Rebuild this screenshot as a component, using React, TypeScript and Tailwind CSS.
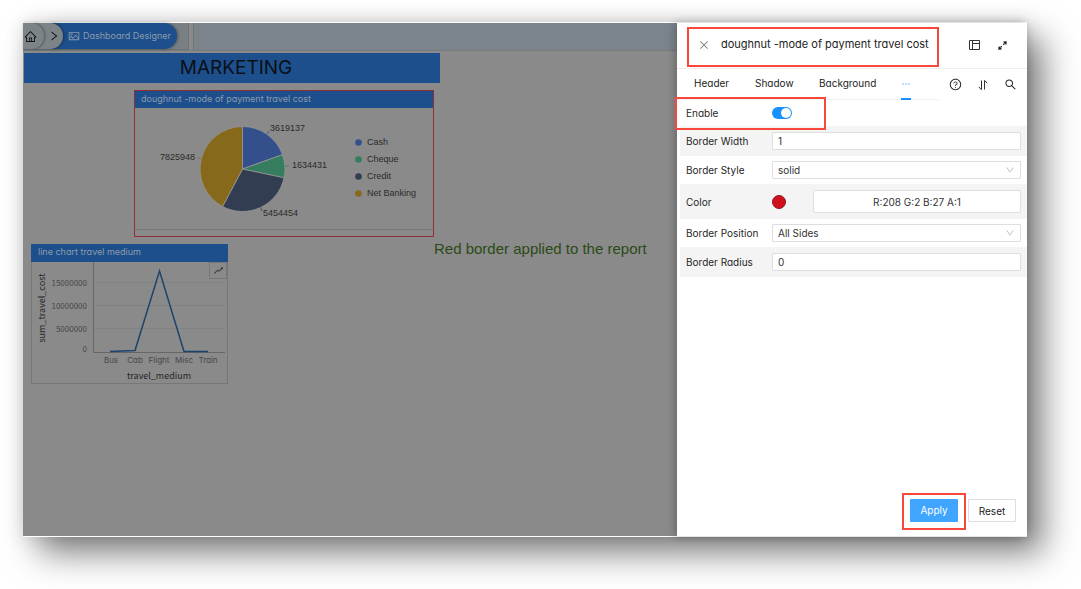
import React from "react";
import {
  AiOutlineHome,
  AiOutlineRight,
  AiOutlinePicture,
  AiOutlineClose,
  AiOutlineQuestionCircle,
  AiOutlineSearch,
  AiOutlineDown,
  AiOutlineRise,
} from "react-icons/ai";

const slices = [
  { name: "Cash", value: 3619137, color: "#34508c" },
  { name: "Cheque", value: 1634431, color: "#367c5f" },
  { name: "Credit", value: 5454454, color: "#333d51" },
  { name: "Net Banking", value: 7825948, color: "#87691c" },
];

const CX = 107.5;
const CY = 61;
const R = 42.5;

function point(angle: number, radius: number): [number, number] {
  return [CX + radius * Math.sin(angle), CY - radius * Math.cos(angle)];
}

function PieChart() {
  const total = slices.reduce((sum, s) => sum + s.value, 0);
  let angle = 0;
  const labels: { x: number; y: number; anchor: "start" | "end" }[] = [
    { x: 135, y: 23, anchor: "start" },
    { x: 157, y: 60, anchor: "start" },
    { x: 128, y: 108, anchor: "start" },
    { x: 60, y: 52, anchor: "end" },
  ];
  return (
    <svg
      width="196"
      height="121"
      viewBox="0 0 196 121"
      className="shrink-0 font-['Liberation_Sans',sans-serif] text-[9px]"
      role="img"
      aria-label="Travel cost by mode of payment"
    >
      {slices.map((s, i) => {
        const start = angle;
        const end = angle + (s.value / total) * Math.PI * 2;
        angle = end;
        const mid = (start + end) / 2;
        const [x1, y1] = point(start, R);
        const [x2, y2] = point(end, R);
        const [lx1, ly1] = point(mid, R);
        const [lx2, ly2] = point(mid, R + 4);
        return (
          <g key={s.name}>
            <path
              d={`M${CX} ${CY}L${x1} ${y1}A${R} ${R} 0 ${end - start > Math.PI ? 1 : 0} 1 ${x2} ${y2}Z`}
              fill={s.color}
              stroke="#969696"
              strokeWidth="0.8"
            />
            <path d={`M${lx1} ${ly1}L${lx2} ${ly2}`} stroke={s.color} strokeWidth="0.8" />
            <text x={labels[i].x} y={labels[i].y} textAnchor={labels[i].anchor} fill="#2a2a2a">
              {s.value}
            </text>
          </g>
        );
      })}
    </svg>
  );
}

function LineChart() {
  const ticks = [
    { label: "15000000", y: 21 },
    { label: "10000000", y: 44 },
    { label: "5000000", y: 67 },
    { label: "0", y: 87 },
  ];
  const media = [
    { label: "Bus", x: 79 },
    { label: "Cab", x: 103 },
    { label: "Flight", x: 127 },
    { label: "Misc", x: 152 },
    { label: "Train", x: 176 },
  ];
  return (
    <svg
      width="195"
      height="121"
      viewBox="0 0 195 121"
      className="block font-['Noto_Sans_CJK_SC',sans-serif]"
      role="img"
      aria-label="Travel cost by travel medium"
    >
      <path d="M62 20.500H193M62 43.500H193M62 66.500H193" stroke="#818181" strokeWidth="1" fill="none" />
      <path d="M61.500 0V90.500H193" stroke="#666" strokeWidth="1" fill="none" />
      {ticks.map((t) => (
        <text key={t.label} x="55" y={t.y + 3} textAnchor="end" fontSize="8" fill="#474747">
          {t.label}
        </text>
      ))}
      {media.map((m) => (
        <text
          key={m.label}
          x={m.x}
          y="101"
          textAnchor="middle"
          fontSize="8"
          fill="#474747"
          className="font-[Inter,sans-serif]"
        >
          {m.label}
        </text>
      ))}
      <path d="M78 89.500L103 88.500L127.500 9L152 89.500H176" stroke="#1d436b" strokeWidth="1.500" fill="none" />
      <text x="127" y="117" textAnchor="middle" fontSize="9" fill="#262626">
        travel_medium
      </text>
      <text transform="translate(13 46) rotate(-90)" textAnchor="middle" fontSize="9" fill="#262626">
        sum_travel_cost
      </text>
    </svg>
  );
}

function LayoutIcon() {
  return (
    <svg width="12" height="12" viewBox="0 0 12 12" fill="none" stroke="#333" strokeWidth="1">
      <path d="M1.500 1.500H11.500V10.500H1.500Z" />
      <path d="M4.500 1.500V10.500M4.500 4.500H11.500" />
    </svg>
  );
}

function SortIcon() {
  return (
    <svg width="12" height="12" viewBox="0 0 12 12" fill="none" stroke="#333" strokeWidth="1">
      <path d="M4.500 1.500V10.500H4.200L1.800 7.800" />
      <path d="M7.500 10.500V1.500H7.800L10.200 4.200" />
    </svg>
  );
}

function ExpandIcon() {
  return (
    <svg width="11" height="11" viewBox="0 0 11 11" fill="#222">
      <path d="M3.500 7.500L4.800 6.200M6.200 4.800L7.500 3.500" stroke="#222" strokeWidth="1.200" fill="none" />
      <path d="M6.300 1.600L9.800 1.200L9.400 4.700L8.300 4.200L6.800 2.700Z" />
      <path d="M1.600 6.300L1.200 9.800L4.700 9.400L4.200 8.300L2.700 6.800Z" />
    </svg>
  );
}

function Row({
  label,
  htmlFor,
  shaded,
  children,
}: {
  label: string;
  htmlFor: string;
  shaded?: boolean;
  children: React.ReactNode;
}) {
  return (
    <div
      className={
        shaded
          ? "ml-[3px] flex items-center bg-[#f4f4f4] px-[6px] py-[6px]"
          : "ml-[3px] flex items-center px-[6px] py-[5px]"
      }
    >
      <label htmlFor={htmlFor} className="w-[86px] shrink-0 text-[#262626]">
        {label}
      </label>
      {children}
    </div>
  );
}

const fieldClass =
  "h-[18px] w-full appearance-none rounded-[1px] border border-[#dedede] bg-white px-[5px] text-[10px] text-[#333] outline-none";

function SelectField({ id, value, options }: { id: string; value: string; options: string[] }) {
  return (
    <div className="relative min-w-0 flex-1">
      <select id={id} defaultValue={value} className={fieldClass}>
        {options.map((o) => (
          <option key={o}>{o}</option>
        ))}
      </select>
      <AiOutlineDown className="pointer-events-none absolute top-[4px] right-[6px] size-[10px] text-[#b5b5b5]" />
    </div>
  );
}

function Drawer() {
  return (
    <aside className="relative flex w-[350px] shrink-0 flex-col border-b border-[#e4e8e8] bg-white shadow-[-2px_0_8px_rgba(0,0,0,0.25)]">
      <header className="flex h-[46px] items-start border-b border-[#eeeeee] pt-[4px] pr-[19px] pl-[10px]">
        <div className="flex h-[40px] w-[252px] items-center border-2 border-[#f8473b] pb-[5px] pl-[9px]">
          <button type="button" aria-label="Close" className="text-[#888]">
            <AiOutlineClose className="size-[12px]" />
          </button>
          <h2 className="ml-[11px] text-[11px] whitespace-nowrap text-[#222]">doughnut -mode of payment travel cost</h2>
        </div>
        <div className="ml-auto flex h-[36px] items-center gap-[17px] text-[#222]">
          <button type="button" aria-label="Layout">
            <LayoutIcon />
          </button>
          <button type="button" aria-label="Expand">
            <ExpandIcon />
          </button>
        </div>
      </header>

      <div className="flex h-[31px] items-stretch pr-[10px]">
        <div role="tablist" className="flex w-[262px] items-stretch border-b border-[#f0f0f0] pl-[17px] text-[10px] text-[#222]">
          <button type="button" role="tab" className="w-[61px] pb-px text-left">
            Header
          </button>
          <button type="button" role="tab" className="w-[64px] pb-px text-left">
            Shadow
          </button>
          <button type="button" role="tab" className="w-[82px] pb-px text-left">
            Background
          </button>
          <button
            type="button"
            role="tab"
            aria-label="More"
            aria-selected="true"
            className="-mb-px flex w-[10px] items-center justify-center border-b-2 border-[#1890ff] text-[#1890ff]"
          >
            <svg width="8" height="2" viewBox="0 0 8 2" fill="#4aa6ff">
              <circle cx="1" cy="1" r="0.700" />
              <circle cx="4" cy="1" r="0.700" />
              <circle cx="7" cy="1" r="0.700" />
            </svg>
          </button>
        </div>
        <div className="ml-auto flex items-center gap-[15px] text-[#222]">
          <button type="button" aria-label="Help">
            <AiOutlineQuestionCircle className="size-[13px]" />
          </button>
          <button type="button" aria-label="Sort">
            <SortIcon />
          </button>
          <button type="button" aria-label="Search">
            <AiOutlineSearch className="size-[13px]" />
          </button>
        </div>
      </div>

      <form className="flex flex-1 flex-col text-[10px] leading-[14px]" onSubmit={(e) => e.preventDefault()}>
        <div className="relative h-[26px]">
          <div className="pointer-events-none absolute -top-[3px] -left-[2px] h-[33px] w-[151px] border-2 border-[#f8473b]" />
          <div className="ml-[9px] flex h-[26px] items-center">
            <label htmlFor="enable" className="w-[86px] text-[#262626]">
              Enable
            </label>
            <input
              id="enable"
              type="checkbox"
              role="switch"
              defaultChecked
              className="h-[12px] w-[20px] appearance-none rounded-full bg-[#bfbfbf] p-px before:block before:size-[10px] before:rounded-full before:bg-white checked:bg-[#1890ff] checked:before:ml-[8px]"
            />
          </div>
        </div>
        <Row label="Border Width" htmlFor="border-width" shaded>
          <input id="border-width" type="text" defaultValue="1" className={fieldClass} />
        </Row>
        <Row label="Border Style" htmlFor="border-style">
          <SelectField id="border-style" value="solid" options={["solid", "dashed", "dotted"]} />
        </Row>
        <Row label="Color" htmlFor="border-color" shaded>
          <span className="size-[14px] shrink-0 rounded-full border border-[#8f1720] bg-[#d0101d]" />
          <button
            id="border-color"
            type="button"
            className="ml-[27px] h-[23px] flex-1 rounded-[2px] border border-[#dedede] bg-white text-[#333]"
          >
            R:208 G:2 B:27 A:1
          </button>
        </Row>
        <Row label="Border Position" htmlFor="border-position">
          <SelectField id="border-position" value="All Sides" options={["All Sides", "Top", "Right", "Bottom", "Left"]} />
        </Row>
        <Row label="Border Radius" htmlFor="border-radius" shaded>
          <input id="border-radius" type="text" defaultValue="0" className={fieldClass} />
        </Row>

        <div className="mt-auto flex items-center justify-end gap-[2px] pr-[11px] pb-[6px]">
          <div className="border-2 border-[#f8473b] px-[6px] pt-[4px] pb-[6px]">
            <button type="submit" className="block h-[23px] w-[48px] rounded-[1px] bg-[#40a5ff] pb-px text-white">
              Apply
            </button>
          </div>
          <button type="button" className="mb-[2px] h-[23px] w-[48px] rounded-[1px] border border-[#dedede] bg-white text-[#222]">
            Reset
          </button>
        </div>
      </form>
    </aside>
  );
}

function Breadcrumb() {
  return (
    <nav className="flex h-[27px] w-[166px] items-stretch border-r border-b border-[#6c7275] bg-[#788084]">
      <a
        href="#home"
        aria-label="Home"
        className="z-20 flex w-[21px] items-center rounded-r-full bg-[#7c8488] pl-[1px] text-[#111] shadow-[1px_0_3px_rgba(0,0,0,0.35)]"
      >
        <AiOutlineHome className="size-[13px]" />
      </a>
      <span className="z-10 -ml-[10px] flex w-[29px] items-center rounded-r-full bg-[#7c8488] pl-[14px] text-[#111] shadow-[1px_0_3px_rgba(0,0,0,0.35)]">
        <AiOutlineRight className="size-[12px]" />
      </span>
      <a
        href="#designer"
        className="-ml-[12px] flex items-center gap-[3px] rounded-r-full bg-[#1c4f8c] pr-[6px] pl-[17px] text-[9px] whitespace-nowrap text-[#8c9bab] shadow-[1px_0_3px_rgba(0,0,0,0.35)]"
      >
        <AiOutlinePicture className="size-[12px]" />
        Dashboard Designer
      </a>
    </nav>
  );
}

export default function App() {
  return (
    <div className="flex min-h-screen flex-col bg-white pt-[22px] pr-[54px] pb-[52px] pl-[23px] font-[Inter,sans-serif] [font-feature-settings:'cv11']">
      <div className="flex flex-1 border-t border-white shadow-[0_0_18px_rgba(0,0,0,0.12),16px_16px_32px_rgba(0,0,0,0.5)]">
        <main className="min-w-0 flex-1 border-b border-white bg-[#8a8a8a]">
          <div className="flex gap-[4px] border-b border-[#747c80]">
            <Breadcrumb />
            <div className="flex-1 border-l border-[#6c7275] bg-[#7b848b]" />
          </div>
          <h1 className="mt-[2px] ml-px flex h-[30px] w-[416px] items-center justify-center bg-[#1c4f8c] pl-[8px] text-[19px] text-[#0b0f16]">
            MARKETING
          </h1>

          <section className="mt-[7px] ml-[111px] w-[300px] border border-[#8f2f38]">
            <h2 className="h-[17px] bg-[#1c4f8c] pl-[6px] text-[9px] leading-[16px] text-[#8c9bab]">
              doughnut -mode of payment travel cost
            </h2>
            <div className="flex border-b border-[#777]">
              <PieChart />
              <ul className="ml-[24px] flex flex-col gap-[4px] pt-[28px] font-['Liberation_Sans',sans-serif] text-[9px] leading-[13px] text-[#2a2a2a]">
                {slices.map((s) => (
                  <li key={s.name} className="flex items-center gap-[5px] whitespace-nowrap">
                    <svg width="7" height="7" viewBox="0 0 7 7">
                      <circle cx="3.500" cy="3.500" r="3.300" fill={s.color} />
                    </svg>
                    {s.name}
                  </li>
                ))}
              </ul>
            </div>
            <div className="h-[6px]" />
          </section>

          <div className="flex items-start">
            <section className="relative mt-[7px] ml-[8px] w-[197px] shrink-0 border border-t-0 border-[#777]">
              <h2 className="-mx-px h-[18px] bg-[#1c4f8c] pl-[7px] text-[9px] leading-[16px] text-[#8c9bab]">
                line chart travel medium
              </h2>
              <LineChart />
              <button
                type="button"
                aria-label="Chart type"
                className="absolute top-[18px] right-0 flex h-[17px] w-[18px] items-center justify-center border border-[#777] bg-[#8a8a8a] text-[#333]"
              >
                <AiOutlineRise className="size-[11px]" />
              </button>
            </section>
            <p className="mt-[2px] ml-[206px] font-['Liberation_Sans',sans-serif] text-[15px] leading-[20px] whitespace-nowrap text-[#2b4a17]">
              Red border applied to the report
            </p>
          </div>
        </main>
        <Drawer />
      </div>
    </div>
  );
}
